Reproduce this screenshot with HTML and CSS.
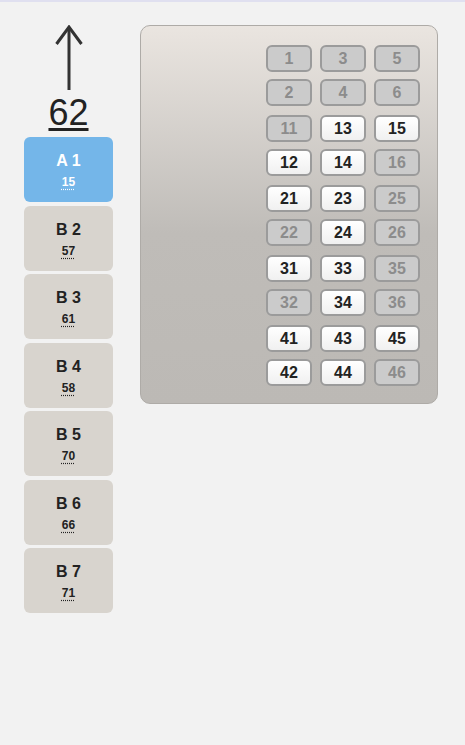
FILE: index.html
```html
<!DOCTYPE html>
<html lang="en">
<head>
    <meta charset="UTF-8">
    <meta name="viewport" content="width=device-width, initial-scale=1.0">
    <title>Elevator - Floor 62</title>
    <link rel="stylesheet" href="styles.css">
</head>
<body>
    <div class="layout">
        <div class="side">
            <svg class="arrow" width="28" height="68" viewBox="0 0 28 68">
                <line x1="14" y1="2" x2="14" y2="65" stroke="#333" stroke-width="3"/>
                <polyline points="1.5,19 14,2 26.5,19" fill="none" stroke="#333" stroke-width="3"/>
            </svg>
            <div class="floor">62</div>
            <div class="cars">
                <div class="car active"><div class="car-name">A 1</div><abbr class="car-count" title="15">15</abbr></div>
                <div class="car"><div class="car-name">B 2</div><abbr class="car-count" title="57">57</abbr></div>
                <div class="car"><div class="car-name">B 3</div><abbr class="car-count" title="61">61</abbr></div>
                <div class="car"><div class="car-name">B 4</div><abbr class="car-count" title="58">58</abbr></div>
                <div class="car"><div class="car-name">B 5</div><abbr class="car-count" title="70">70</abbr></div>
                <div class="car"><div class="car-name">B 6</div><abbr class="car-count" title="66">66</abbr></div>
                <div class="car"><div class="car-name">B 7</div><abbr class="car-count" title="71">71</abbr></div>
            </div>
        </div>

        <div class="panel">
            <div class="group">
                <div class="seat off">1</div><div class="seat off">3</div><div class="seat off">5</div>
                <div class="seat off">2</div><div class="seat off">4</div><div class="seat off">6</div>
            </div>
            <div class="group">
                <div class="seat off">11</div><div class="seat">13</div><div class="seat">15</div>
                <div class="seat">12</div><div class="seat">14</div><div class="seat off">16</div>
            </div>
            <div class="group">
                <div class="seat">21</div><div class="seat">23</div><div class="seat off">25</div>
                <div class="seat off">22</div><div class="seat">24</div><div class="seat off">26</div>
            </div>
            <div class="group">
                <div class="seat">31</div><div class="seat">33</div><div class="seat off">35</div>
                <div class="seat off">32</div><div class="seat">34</div><div class="seat off">36</div>
            </div>
            <div class="group">
                <div class="seat">41</div><div class="seat">43</div><div class="seat">45</div>
                <div class="seat">42</div><div class="seat">44</div><div class="seat off">46</div>
            </div>
        </div>
    </div>
</body>
</html>
```

FILE: styles.css
```css
body { margin: 0; background-color: #f2f2f2; border-top: 2px solid #e0e0f0; font-family: 'Liberation Sans', Arial, sans-serif; color: #222; }
.layout { display: flex; align-items: flex-start; gap: 27px; padding: 23px 24px; }
.side { width: 89px; display: flex; flex-direction: column; align-items: center; }
.arrow { display: block; }
.floor { font-size: 36px; line-height: 40px; text-decoration: underline; text-underline-offset: 3px; text-decoration-thickness: 3px; color: #222; margin-bottom: 4px; }
.cars { display: flex; flex-direction: column; gap: 3.5px; width: 100%; }
.car { height: 65px; box-sizing: border-box; padding-top: 14px; background-color: #d8d4ce; border-radius: 6px; display: flex; flex-direction: column; align-items: center; }
.car.active { background-color: #74b6e9; color: #fff; }
.car-name { font-size: 16px; line-height: 20px; font-weight: bold; margin-bottom: 3px; }
.car-count { font-size: 12px; line-height: 16px; font-weight: bold; text-decoration: underline dotted; text-underline-offset: 3px; }
.panel { width: 298px; height: 379px; box-sizing: border-box; padding: 19px 17px 0 0; border: 1px solid #aeaba7; border-radius: 10px; background: linear-gradient(#eae5e0, #bfbcb8 55%, #bcb9b5); display: flex; flex-direction: column; align-items: flex-end; gap: 9px; }
.group { display: grid; grid-template-columns: repeat(3, 46px); grid-auto-rows: 27px; gap: 7px 8px; }
.seat { box-sizing: border-box; border: 2px solid #9b9b9b; border-radius: 6px; background: linear-gradient(#ffffff, #f0f0f0); font-size: 16px; font-weight: bold; display: flex; align-items: center; justify-content: center; color: #222; }
.seat.off { background: #cbcbcb; color: #8c8c8c; }
```
